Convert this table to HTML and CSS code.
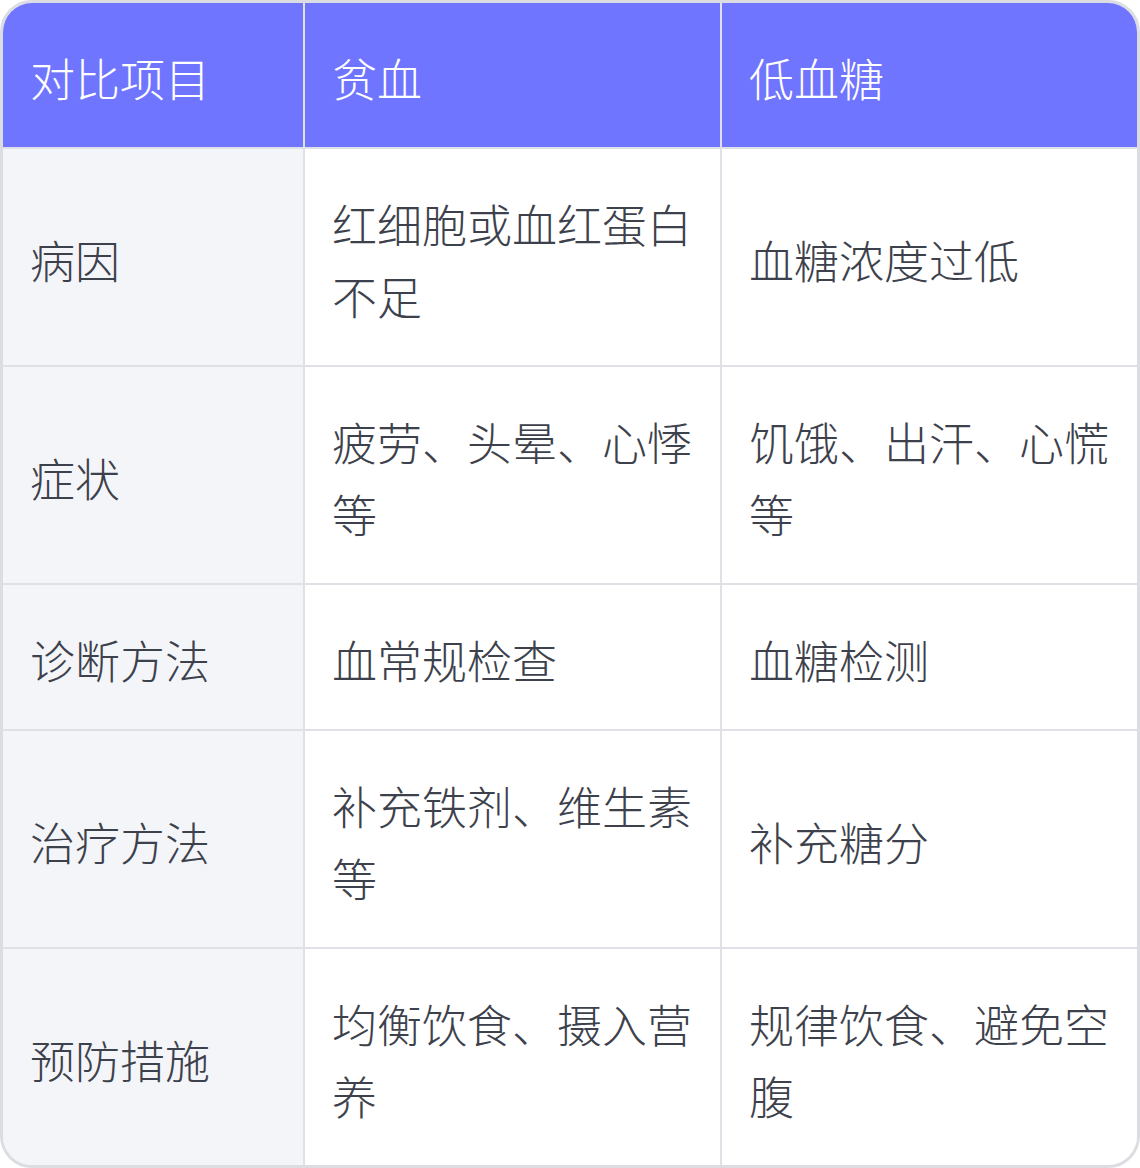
FILE: index.html
```html
<!DOCTYPE html>
<html lang="zh-CN">
<head>
<meta charset="utf-8">
<title>贫血与低血糖对比</title>
<link rel="stylesheet" href="styles.css">
</head>
<body>
<div class="table-wrap">
  <div class="grid">
    <div class="cell head">对比项目</div>
    <div class="cell head">贫血</div>
    <div class="cell head">低血糖</div>

    <div class="cell label">病因</div>
    <div class="cell">红细胞或血红蛋白不足</div>
    <div class="cell">血糖浓度过低</div>

    <div class="cell label">症状</div>
    <div class="cell">疲劳、头晕、心悸等</div>
    <div class="cell">饥饿、出汗、心慌等</div>

    <div class="cell label">诊断方法</div>
    <div class="cell">血常规检查</div>
    <div class="cell">血糖检测</div>

    <div class="cell label">治疗方法</div>
    <div class="cell">补充铁剂、维生素等</div>
    <div class="cell">补充糖分</div>

    <div class="cell label">预防措施</div>
    <div class="cell">均衡饮食、摄入营养</div>
    <div class="cell">规律饮食、避免空腹</div>
  </div>
</div>
</body>
</html>
```
FILE: styles.css
```css
html, body {
  margin: 0;
  padding: 0;
  background: #ffffff;
}

.table-wrap {
  width: 1140px;
  height: 1168px;
  box-sizing: border-box;
  border: 3px solid #dcdde2;
  border-radius: 32px;
  overflow: hidden;
  background: #e0e1e6;
}

.grid {
  display: grid;
  grid-template-columns: 300px 415px 415px;
  gap: 2px;
  background: #e0e1e6;
  font-family: "Noto Sans CJK SC", "Noto Sans", sans-serif;
  font-size: 45px;
  font-weight: 300;
  line-height: 72px;
  color: #3d414c;
}

.cell {
  display: flex;
  align-items: center;
  padding: 39px 26px 33px 27px;
  background: #ffffff;
  word-break: break-all;
}

.cell.head {
  background: #7075ff;
  color: #ffffff;
}

.cell.label {
  background: #f4f5f9;
}
```
